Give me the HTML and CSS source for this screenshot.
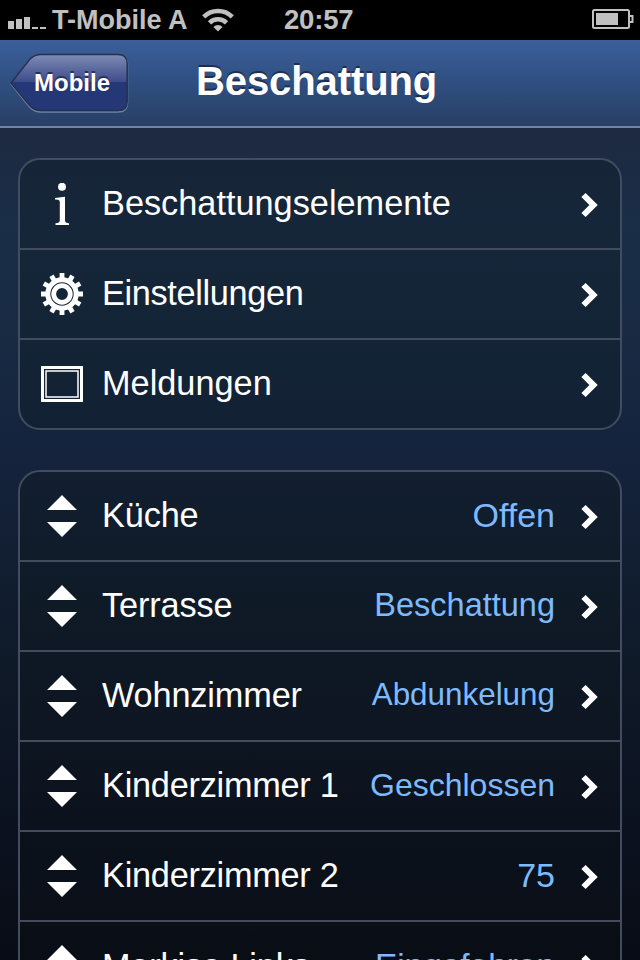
FILE: index.html
```
<!DOCTYPE html>
<html lang="de">
<head>
<meta charset="utf-8">
<title>Beschattung</title>
<link rel="stylesheet" href="styles.css">
</head>
<body>
<svg class="defs" width="0" height="0">
  <defs>
    <symbol id="chevron" viewBox="0 0 18 26"><path d="M2.500 3 12.500 13 2.500 23" fill="none" stroke="#fff" stroke-width="6"/></symbol>
    <symbol id="updown" viewBox="0 0 30 42"><path d="M15 0 30 15H0zM15 42 0 27H30z" fill="#fff"/></symbol>
    <path id="teeth" d="M18.600 0h4.800v6h-4.800zM18.600 36h4.800v6h-4.800zM0 18.600v4.800h6v-4.800zM36 18.600v4.800h6v-4.800z" fill="#fff"/>
  </defs>
</svg>
<header class="status">
  <svg class="signal" width="38" height="12"><path d="M0 4h6v8H0zM8 2h6v10H8zM16 0h6v12h-6zM24 10h6v2h-6zM32 10h6v2h-6z" fill="#c0c0c0"/></svg>
  <span class="carrier">T-Mobile A</span>
  <svg class="wifi" width="32" height="24" viewBox="0 0 32 24"><g fill="none" stroke="#c0c0c0" stroke-width="4.500"><path d="M1.700 8.800A20.500 20.500 0 0 1 30.300 8.800"/><path d="M7.500 14.900A12 12 0 0 1 24.500 14.900"/></g><path d="M16 23.500l-4.600-4.600a6.500 6.500 0 0 1 9.200 0z" fill="#c0c0c0"/></svg>
  <span class="time">20:57</span>
  <svg class="battery" width="42" height="20"><rect x="1" y="1" width="36" height="18" rx="1.500" fill="none" stroke="#c0c0c0" stroke-width="2"/><path d="M4 4h22v12H4z" fill="#c0c0c0"/><path d="M38 7h2.500v6H38" fill="none" stroke="#c0c0c0" stroke-width="2"/></svg>
</header>
<nav class="bar">
  <a class="back">
    <svg class="back-shape" width="120" height="60" viewBox="0 0 120 60">
      <defs><linearGradient id="gloss" x1="0" y1="0" x2="0" y2="1"><stop offset="0" stop-color="#7f8bb5"/><stop offset=".5" stop-color="#3c4a88"/><stop offset=".5" stop-color="#243777"/><stop offset="1" stop-color="#253777"/></linearGradient></defs>
      <path d="M1 31 20 6.500Q24.500 2 31 2H108Q117.500 2 117.500 11V50Q117.500 59 108 59H31Q24.500 59 20 54.500Z" fill="none" stroke="#7183a5" stroke-width="1.500"/>
      <path d="M1 30 20 6Q24.500 1.500 31 1.500H108Q117.200 1.500 117.200 10.500V48.500Q117.200 57.500 108 57.500H31Q24.500 57.500 20 53Z" fill="url(#gloss)" stroke="#26304f" stroke-width="1.500"/>
    </svg>
    <span class="back-text">Mobile</span>
  </a>
  <h1>Beschattung</h1>
</nav>
<main>
  <ul class="group">
    <li><svg class="icon" viewBox="0 0 42 42"><circle cx="21" cy="3.800" r="4" fill="#fff"/><path d="M14 15 24 13.700V37.500Q24 40 28 40.200V42H14.500V40.200Q18.800 40 18.800 37.500V19Q18.800 17 17 16.800L14 16.600Z" fill="#fff"/></svg><span class="label">Beschattungselemente</span><svg class="chev"><use href="#chevron"/></svg></li>
    <li><svg class="icon" viewBox="0 0 42 42"><use href="#teeth"/><use href="#teeth" transform="rotate(30 21 21)"/><use href="#teeth" transform="rotate(60 21 21)"/><g fill="none" stroke="#fff"><circle cx="21" cy="21" r="14.200" stroke-width="5"/><circle cx="21" cy="21" r="8.300" stroke-width="4.800"/></g></svg><span class="label settings">Einstellungen</span><svg class="chev"><use href="#chevron"/></svg></li>
    <li><svg class="icon" viewBox="0 0 42 42"><g fill="none" stroke="#fff"><path d="M1.500 4.500h39v33h-39z" stroke-width="3"/><path d="M5 8h32v26H5z" stroke-width="1.500"/></g></svg><span class="label">Meldungen</span><svg class="chev"><use href="#chevron"/></svg></li>
  </ul>
  <ul class="group rooms">
    <li><svg class="icon updown"><use href="#updown"/></svg><span class="label room">Küche</span><span class="value">Offen</span><svg class="chev"><use href="#chevron"/></svg></li>
    <li><svg class="icon updown"><use href="#updown"/></svg><span class="label room">Terrasse</span><span class="value fit-b">Beschattung</span><svg class="chev"><use href="#chevron"/></svg></li>
    <li><svg class="icon updown"><use href="#updown"/></svg><span class="label room">Wohnzimmer</span><span class="value fit-c">Abdunkelung</span><svg class="chev"><use href="#chevron"/></svg></li>
    <li><svg class="icon updown"><use href="#updown"/></svg><span class="label numbered">Kinderzimmer 1</span><span class="value fit-d">Geschlossen</span><svg class="chev"><use href="#chevron"/></svg></li>
    <li><svg class="icon updown"><use href="#updown"/></svg><span class="label numbered">Kinderzimmer 2</span><span class="value">75</span><svg class="chev"><use href="#chevron"/></svg></li>
    <li><svg class="icon updown"><use href="#updown"/></svg><span class="label room">Markise Links</span><span class="value fit-a">Eingefahren</span><svg class="chev"><use href="#chevron"/></svg></li>
  </ul>
</main>
</body>
</html>
```
FILE: styles.css
```
* { box-sizing: border-box; }
html, body { height: 960px; overflow: hidden; }
body {
  margin: 0;
  font-family: "Liberation Sans", Arial, sans-serif;
  color: #fff;
  background: linear-gradient(#1e2940 128px, #1a2e48 220px, #182b43 330px, #15233d 450px, #101c2c 620px, #0c1321 800px, #080c16 960px);
}
.defs { position: absolute; }
.status {
  height: 40px;
  display: flex;
  align-items: center;
  padding: 0 6px 0 8px;
  background: #000;
  color: #c0c0c0;
  font-weight: bold;
  white-space: nowrap;
}
.signal { margin: 6px 6px 0 0; flex: none; }
.carrier { width: 150px; font-size: 27px; }
.wifi { flex: none; margin-top: -1px; }
.time { margin-left: 50px; font-size: 27.5px; letter-spacing: -.2px; }
.battery { margin: -2px 0 0 auto; flex: none; }
.bar {
  height: 88px;
  display: flex;
  align-items: center;
  background: linear-gradient(#3b5f9c, #2f4f80 50%, #283f66);
  border-bottom: 2px solid #7384a5;
}
.back { display: grid; width: 120px; margin: 0 0 0 10px; }
.back-shape, .back-text { grid-area: 1 / 1; }
.back-text {
  align-self: center;
  padding: 0 0 1px 24px;
  font-size: 24px;
  font-weight: bold;
  text-shadow: 0 -2px 0 #27305c;
}
h1 {
  margin: 0 0 4px 66px;
  font-size: 40px;
  line-height: 46px;
  letter-spacing: -.1px;
  text-shadow: 0 -2px 0 #1d2f50;
}
main { padding: 30px 18px 0; }
.group {
  list-style: none;
  margin: 0 0 40px;
  padding: 0;
  border: 2px solid #434c5e;
  border-radius: 22px;
  background: rgba(15, 27, 37, .4);
}
.rooms { background: linear-gradient(rgba(15, 27, 37, .5), rgba(10, 14, 20, .5)); }
li {
  height: 90px;
  display: flex;
  align-items: center;
  padding: 0 21px;
  white-space: nowrap;
}
li:last-child { height: 88px; }
li:not(:last-child) { border-bottom: 2px solid #434c5e; }
.rooms li:last-child .label, .rooms li:last-child .value { margin-bottom: 1px; }
.icon { width: 42px; height: 42px; flex: none; margin-right: 19px; }
.updown { width: 30px; margin: 0 25px 0 6px; }
.label { font-size: 34.3px; line-height: 40px; margin-bottom: 3px; }
.settings { letter-spacing: -.35px; }
.room { letter-spacing: -.15px; }
.numbered { letter-spacing: -.25px; }
.value { margin-left: auto; font-size: 34px; line-height: 40px; color: #7ebaff; margin-bottom: 3px; }
.fit-a { font-size: 33.4px; }
.fit-b { font-size: 32.5px; }
.fit-c { font-size: 31.4px; }
.fit-d { font-size: 32px; }
.chev { width: 18px; height: 26px; flex: none; margin: 2px 0 0 auto; }
.value + .chev { margin-left: 26px; }
```
